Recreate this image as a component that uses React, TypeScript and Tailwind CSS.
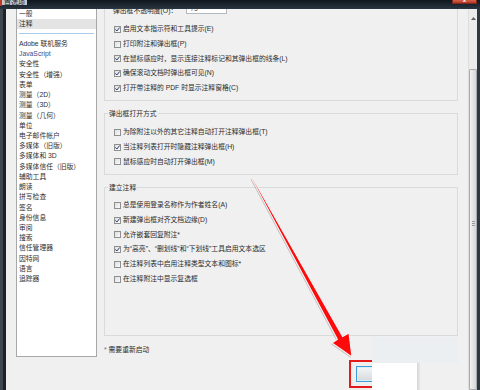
import React from "react";

const FONT = "font-['Liberation_Sans','Noto_Sans_CJK_SC',sans-serif]";

const Check = ({ checked }: { checked: boolean }) => (
  <span className="w-[7px] h-[7px] border border-[#8e8f8f] bg-gradient-to-br from-[#dedede] to-[#fbfbfb] flex items-center justify-center shrink-0">
    {checked && (
      <svg width="5" height="5" viewBox="0 0 5 5">
        <path d="M0.4 2.4 L1.9 4 L4.7 0.5" fill="none" stroke="#2a3d78" strokeWidth="1" />
      </svg>
    )}
  </span>
);

const Row = ({ checked, label }: { checked: boolean; label: string }) => (
  <div className="h-[14.8px] flex items-center pl-[9px] gap-[2px]">
    <Check checked={checked} />
    <span className="text-[6.8px] leading-[14.8px] text-[#2b2b2b] whitespace-nowrap">{label}</span>
  </div>
);

const items1: [boolean, string][] = [
  [true, "启用文本指示符和工具提示(E)"],
  [false, "打印附注和弹出框(P)"],
  [true, "在鼠标感应时，显示连接注释标记和其弹出框的线条(L)"],
  [true, "确保滚动文档时弹出框可见(N)"],
  [true, "打开带注释的 PDF 时显示注释窗格(C)"],
];
const items2: [boolean, string][] = [
  [false, "为除附注以外的其它注释自动打开注释弹出框(T)"],
  [true, "当注释列表打开时隐藏注释弹出框(H)"],
  [false, "鼠标感应时自动打开弹出框(M)"],
];
const items3: [boolean, string][] = [
  [false, "总是使用登录名称作为作者姓名(A)"],
  [true, "新建弹出框对齐文档边缘(D)"],
  [false, "允许嵌套回复附注*"],
  [true, "为“高亮”、“删划线”和“下划线”工具启用文本选区"],
  [false, "在注释列表中启用注释类型文本和图标*"],
  [false, "在注释附注中显示复选框"],
];

const listItems = [
  "Adobe 联机服务",
  "JavaScript",
  "安全性",
  "安全性（增强）",
  "表单",
  "测量（2D）",
  "测量（3D）",
  "测量（几何）",
  "单位",
  "电子邮件帐户",
  "多媒体（旧版）",
  "多媒体和 3D",
  "多媒体信任（旧版）",
  "辅助工具",
  "朗读",
  "拼写检查",
  "签名",
  "身份信息",
  "审阅",
  "搜索",
  "信任管理器",
  "因特网",
  "语言",
  "追踪器",
];

export default function App() {
  return (
    <div className={`relative w-[480px] h-[390px] overflow-hidden flex flex-col bg-[#f0f0f0] ${FONT}`}>
      {/* title bar */}
      <div className="h-[9px] shrink-0 flex items-start bg-gradient-to-b from-[#0f161d] to-[#2a3642]">
        <div className="w-[2px] h-[6px] bg-[#c0392b]" />
        <div className="h-[5px] overflow-hidden bg-[#c3c7cb] px-[2px] flex items-end">
          <span className="text-[7px] leading-[7px] text-[#222] -mb-[0px] block translate-y-[1px]">首选项</span>
        </div>
        <div className="flex-1" />
        <div className="w-[25px] h-[4px] mr-[3px] bg-gradient-to-b from-[#d4624e] to-[#b8331f] border-x border-b border-[#7a2a1e] flex items-end justify-center overflow-hidden">
          <span className="text-[6px] leading-[5px] text-white font-bold">x</span>
        </div>
      </div>

      {/* body */}
      <div className="flex-1 flex min-h-0">
        <div className="w-[3px] bg-[#41474e]" />
        <div className="w-[3px] bg-[#1e2328]" />

        <div className="flex-1 flex min-h-0">
          {/* left list */}
          <div className="pl-[10px] pr-[3px]">
            <div className="w-[81px] h-[348px] bg-white border border-[#a8a8a8] border-t-0 text-[6.8px] text-[#2f2f2f]">
              <div className="h-[10px] leading-[10px] pl-[2px]">一般</div>
              <div className="h-[10px] leading-[10px] pl-[2px] bg-[#e4e4e4]">注释</div>
              <div className="mt-[4px] mx-[2px] h-px bg-[#a9cbec]" />
              <div className="mt-[5px]">
                {listItems.map((t) => (
                  <div
                    key={t}
                    className={`h-[10.22px] leading-[10.22px] pl-[2px] whitespace-nowrap ${t === "JavaScript" ? "text-[#3e4c86]" : ""}`}
                  >
                    {t}
                  </div>
                ))}
              </div>
            </div>
          </div>

          {/* right pane */}
          <div className="flex-1 min-h-0 overflow-hidden">
            <div className="-mt-[30px] pl-[4px] pr-[10px]">
              {/* group 1 */}
              <div className="border-x border-b border-[#d8dbde] pt-[23.5px] pb-[4px]">
                <div className="h-[15px] flex items-start pl-[8px]">
                  <span className="text-[6.8px] leading-[15px] text-[#2b2b2b]">弹出框不透明度(O)：</span>
                  <div className="ml-[9px] -mt-[1px] w-[41px] h-[12.5px] bg-white border border-[#b5b8bd] text-[6.8px] leading-[12px] text-[#555] pl-[3px]">
                    75
                  </div>
                </div>
                <div className="mt-[4.5px]">
                  {items1.map(([c, l]) => (
                    <Row key={l} checked={c} label={l} />
                  ))}
                </div>
              </div>

              {/* group 2 */}
              <div className="relative mt-[12px] border border-[#d8dbde] pt-[11px] pb-[4.6px]">
                <span className="absolute left-[3px] -top-[5px] px-[1px] bg-[#f0f0f0] text-[6.8px] leading-[9px] text-[#2b2b2b]">
                  弹出框打开方式
                </span>
                {items2.map(([c, l]) => (
                  <Row key={l} checked={c} label={l} />
                ))}
              </div>

              {/* group 3 */}
              <div className="relative mt-[12px] border border-[#d8dbde] pt-[10px] pb-[48px]">
                <span className="absolute left-[3px] -top-[5px] px-[1px] bg-[#f0f0f0] text-[6.8px] leading-[9px] text-[#2b2b2b]">
                  建立注释
                </span>
                {items3.map(([c, l]) => (
                  <Row key={l} checked={c} label={l} />
                ))}
              </div>

              <div className="mt-[10px] h-[8px] text-[6.8px] leading-[8px] text-[#2b2b2b]">
                <span className="text-[#5a6f96]">*</span> 需要重新启动
              </div>

              {/* footer button */}
              <div className="mt-[12px] pl-[252px]">
                <div className="w-[44px] h-[16px] border border-[#3c9fd8] bg-gradient-to-b from-[#f4f6f8] to-[#d5d9dd] shadow-[inset_0_0_0_1px_#d8eefb]" />
              </div>
            </div>
          </div>

          {/* scrollbar */}
          <div className="w-[9px] bg-[#ececec] border-l border-[#dedede] flex flex-col items-center">
            <div className="h-[18px] flex items-center justify-center">
              <svg width="5" height="3" viewBox="0 0 5 3">
                <path d="M0 3 L2.5 0 L5 3 Z" fill="#606060" />
              </svg>
            </div>
            <div className="mt-[42px] w-[8px] flex-1 border border-[#a9acb0] rounded-t-[1px] bg-gradient-to-r from-[#f3f3f3] via-[#e4e4e4] to-[#d6d6d6] flex flex-col items-center">
              <div className="mt-[151px] flex flex-col gap-[1px]">
                <div className="w-[3px] h-px bg-[#9a9a9a]" />
                <div className="w-[3px] h-px bg-[#9a9a9a]" />
                <div className="w-[3px] h-px bg-[#9a9a9a]" />
              </div>
            </div>
          </div>
        </div>

        <div className="w-[3px] bg-[#2f3741]" />
      </div>

      {/* annotation overlays */}
      <div className="absolute left-[349px] top-[360px] w-[26px] h-[28px] border-2 border-[#e31b1b]" />
      <div className="absolute left-[372px] top-[337px] w-[86px] h-[26px] bg-[#eceff2]" />
      <div className="absolute left-[372px] top-[363px] w-[45px] h-[27px] bg-white" />
      <div className="absolute left-[417px] top-[363px] w-[3px] h-[27px] bg-gradient-to-r from-[#d6d6d6] to-[#e8e8e8]" />

      {/* red arrow */}
      <svg className="absolute left-0 top-0 pointer-events-none" width="480" height="390" viewBox="0 0 480 390">
        <polygon
          points="250.5,179.3 251.5,178.7 341.6,337.5 348,334 351,358 331,344 336.4,340.4"
          fill="#7a7a7a"
          opacity="0.45"
        />
        <polygon
          points="251.5,178.3 252.5,177.7 342.6,336.5 349,333 352,357 332,343 337.4,339.4"
          fill="#ff0a0a"
          stroke="#f4f4f4"
          strokeWidth="1.1"
          strokeLinejoin="miter"
        />
      </svg>
    </div>
  );
}
